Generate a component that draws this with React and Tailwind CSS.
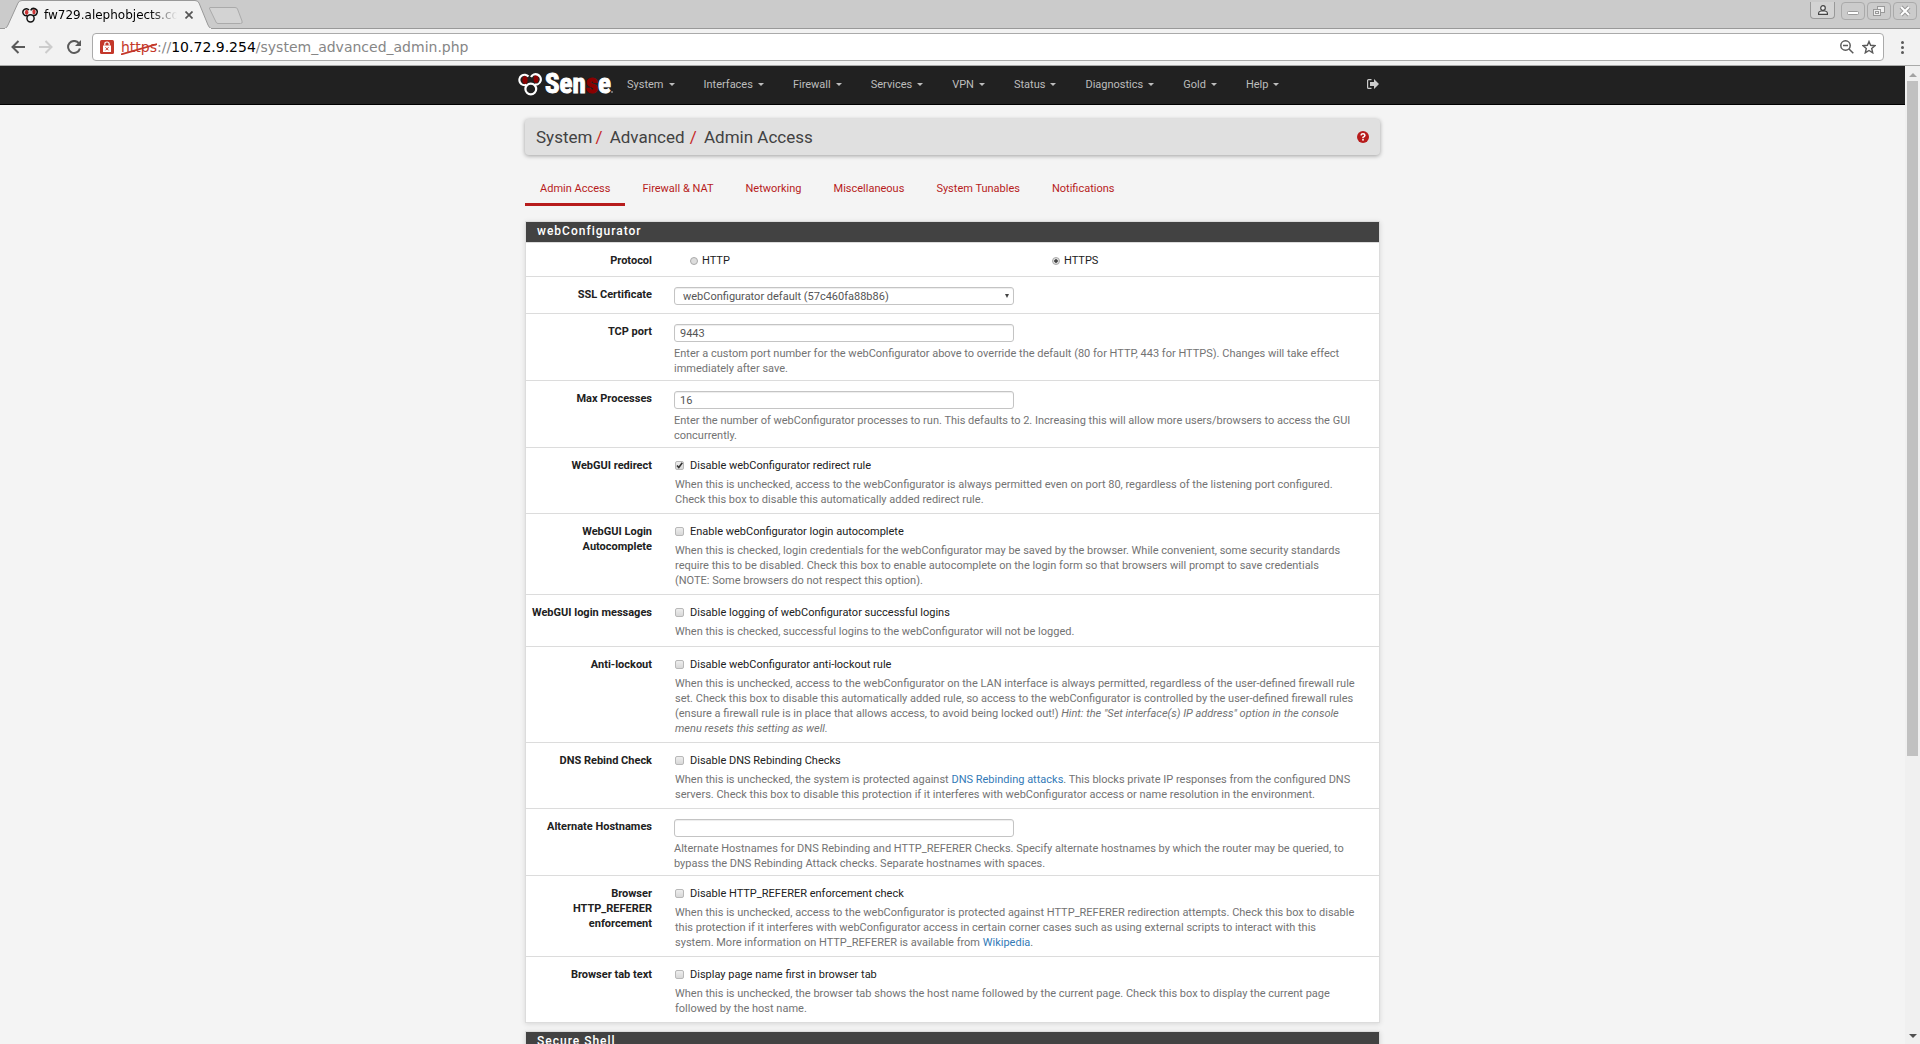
import React from "react";

const NAV = ["System", "Interfaces", "Firewall", "Services", "VPN", "Status", "Diagnostics", "Gold", "Help"];
const TABS = ["Admin Access", "Firewall & NAT", "Networking", "Miscellaneous", "System Tunables", "Notifications"];

function Trefoil({ className, ring, dot }) {
  return (
    <svg viewBox="0 0 24 24" className={className} fill="none" stroke={ring} strokeWidth="2.2">
      <ellipse cx="7" cy="8" rx="2.6" ry="4" fill={dot} stroke="none" />
      <ellipse cx="18" cy="7" rx="2.4" ry="4" fill={dot} stroke="none" />
      <path d="M10.500 4.500A5.200 5.200 0 1 0 8.500 12.800" />
      <path d="M13 5A5.200 5.200 0 1 1 16.500 12.500" />
      <circle cx="12.800" cy="17" r="5.400" />
    </svg>
  );
}

function BrowserChrome() {
  return (
    <div className="shrink-0 text-black">
      <div className="flex h-[29px] items-start justify-between border-b border-[#999] bg-[#cbcbcb]">
        <div className="flex items-start">
          <div className="relative -mb-px h-[29px] w-[212px]">
            <svg viewBox="0 0 212 29" className="absolute inset-0 h-full w-full">
              <path d="M4 29 Q7 28 8 25 L18 3 Q19 0.5 22 0.5 H195 Q198 0.5 199 3 L208 25 Q209 28 212 29 Z" fill="#f2f2f2" stroke="#999" />
              <path d="M5 28.500 H211" stroke="#f2f2f2" />
            </svg>
            <div className="relative flex h-full items-center pl-[22px]">
              <Trefoil className="size-4" ring="#111" dot="#c33" />
              <span className="ml-1.5 w-[133px] overflow-hidden whitespace-nowrap bg-gradient-to-r from-black from-80% to-transparent bg-clip-text font-[DejaVu_Sans,sans-serif] text-xs leading-4 text-transparent">
                fw729.alephobjects.com
              </span>
              <button aria-label="Close tab" className="ml-2">
                <svg viewBox="0 0 8 8" className="size-2" stroke="#555" strokeWidth="1.7"><path d="M.5 .5 7.5 7.5M7.5 .5 .5 7.5" /></svg>
              </button>
            </div>
          </div>
          <button aria-label="New tab" className="mt-[7px] -ml-[3px]">
            <svg viewBox="0 0 34 17" className="h-[17px] w-[34px]"><path d="M1 .5H26Q28 .5 28.500 2L33 14Q34 16.500 31.500 16.500H9Q7.500 16.500 7 15L.7 2Q0 .5 1 .5Z" fill="#d3d3d3" stroke="#aaa" /></svg>
          </button>
        </div>
        <div className="flex items-start gap-[2px] pt-[2px] pr-[3px] text-[#999]">
          <button aria-label="Profile" className="mr-1 flex h-[17px] w-[25px] items-center justify-center rounded-b border border-t-0 border-[#999] bg-[#d3d3d3]">
            <svg viewBox="0 0 10 10" className="size-[10px]" fill="#eee" stroke="#444" strokeWidth="1.200"><path d="M.6 9.400V8Q.6 6.500 3 6H7Q9.400 6.500 9.400 8V9.400Z" /><circle cx="5" cy="3" r="2.300" /></svg>
          </button>
          <button aria-label="Minimize" className="flex h-[18px] w-6 items-center justify-center rounded-sm border border-[#aaa]">
            <svg viewBox="0 0 12 4" className="mt-1 h-1 w-3"><rect x=".5" y=".5" width="11" height="3" rx="1" fill="#fff" stroke="#999" /></svg>
          </button>
          <button aria-label="Restore" className="flex h-[18px] w-6 items-center justify-center rounded-sm border border-[#aaa]">
            <svg viewBox="0 0 12 11" className="h-[11px] w-3" fill="#eee" stroke="#999"><rect x="4.500" y=".5" width="7" height="6" /><rect x=".5" y="3.500" width="7" height="6" /><rect x="2.500" y="5.500" width="3" height="2" /></svg>
          </button>
          <button aria-label="Close" className="flex h-[18px] w-6 items-center justify-center rounded-sm border border-[#aaa]">
            <svg viewBox="0 0 12 12" className="size-3"><path d="M2 2 10 10M10 2 2 10" stroke="#999" strokeWidth="4" /><path d="M2 2 10 10M10 2 2 10" stroke="#fff" strokeWidth="2" /></svg>
          </button>
        </div>
      </div>
      <div className="flex h-[37px] items-center border-b border-[#a9aaa9] bg-[#f2f2f2] pl-[11px]">
        <button aria-label="Back"><svg viewBox="0 0 14 14" className="size-3.5" fill="none" stroke="#5a5a5a" strokeWidth="2"><path d="M14 7H1.500M7.500 1 1.500 7 7.500 13" /></svg></button>
        <button aria-label="Forward" className="ml-3.5"><svg viewBox="0 0 14 14" className="size-3.5" fill="none" stroke="#ccc" strokeWidth="2"><path d="M0 7H12.500M6.500 1 12.500 7 6.500 13" /></svg></button>
        <button aria-label="Reload" className="ml-3.5"><svg viewBox="0 0 14 14" className="size-3.5"><path d="M11.800 3.200A6 6 0 1 0 12.900 8.500" fill="none" stroke="#5a5a5a" strokeWidth="2" /><path d="M14 0V6H8Z" fill="#5a5a5a" /></svg></button>
        <div className="ml-[11px] flex h-7 flex-1 items-center rounded border border-[#aaa] bg-white px-[7px]">
          <svg viewBox="0 0 14 14" className="size-3.5 shrink-0"><rect width="14" height="14" rx="1.500" fill="#c4382b" /><path d="M4.800 5.500V4Q4.800 2 7 2T9.200 4V5.500" fill="none" stroke="#fff" strokeWidth="1.200" /><rect x="3" y="5.500" width="8" height="6.500" fill="#fff" /><path d="M5.500 7.300 8.500 10.300M8.500 7.300 5.500 10.300" stroke="#c4382b" /></svg>
          <div className="ml-[7px] flex-1 whitespace-nowrap font-[DejaVu_Sans,sans-serif] text-[14px] leading-5 text-[#868686]">
            <span className="relative text-[#c4382b]">https
              <svg viewBox="0 0 36 12" preserveAspectRatio="none" className="absolute top-1 left-0 h-3 w-full"><path d="M0 11.500 36 1" stroke="#c4382b" strokeWidth="1.700" /></svg>
            </span>://<span className="text-black">10.72.9.254</span>/system_advanced_admin.php
          </div>
          <button aria-label="Zoom"><svg viewBox="0 0 14 14" className="size-3.5" fill="none" stroke="#5a5a5a" strokeWidth="1.500"><circle cx="5.500" cy="5.500" r="4.700" /><path d="M9 9 13.300 13.300M3 5.500H8" /></svg></button>
          <button aria-label="Bookmark" className="ml-2"><svg viewBox="0 0 14 14" className="size-3.5" fill="none" stroke="#5a5a5a" strokeWidth="1.400"><path d="M7 1.500 8.600 5.300 12.900 5.700 9.700 8.500 10.700 12.800 7 10.500 3.300 12.800 4.300 8.500 1.100 5.700 5.400 5.300Z" /></svg></button>
        </div>
        <button aria-label="Menu" className="mr-4 ml-[17px]"><svg viewBox="0 0 3 13" className="h-[13px] w-[3px]" fill="#5a5a5a"><circle cx="1.500" cy="1.500" r="1.500" /><circle cx="1.500" cy="6.500" r="1.500" /><circle cx="1.500" cy="11.500" r="1.500" /></svg></button>
      </div>
    </div>
  );
}

function Row({ label, htmlFor, className = "pb-1.5", children }) {
  return (
    <div className={`flex gap-[22px] border-t border-[#dcdcdc] pt-2.5 ${className}`}>
      <label htmlFor={htmlFor} className="w-[126px] shrink-0 text-right font-bold whitespace-nowrap">{label}</label>
      <div className="min-w-0 flex-1">{children}</div>
    </div>
  );
}

const FIELD = "block h-[18px] w-[340px] rounded-[3px] border border-[#c4c4c4] bg-white text-[11px] text-[#555] shadow-[inset_0_1px_1px_rgba(0,0,0,0.075)]";

function TextRow({ id, label, value, children }) {
  return (
    <Row label={label} htmlFor={id} className="pb-1">
      <input id={id} type="text" defaultValue={value} className={`${FIELD} px-[5px]`} />
      <p className="mt-1 whitespace-nowrap text-[#737373]">{children}</p>
    </Row>
  );
}

function CheckRow({ id, label, text, checked, className, children }) {
  return (
    <Row label={label} htmlFor={id} className={className}>
      <label className="ml-px flex items-center">
        <span className="relative mr-1.5 flex">
          <input id={id} type="checkbox" defaultChecked={checked} className="peer size-[9px] appearance-none rounded-[2px] border border-[#b8b8b8] bg-gradient-to-b from-[#eee] to-[#d8d8d8]" />
          <svg viewBox="0 0 9 9" className="pointer-events-none absolute inset-0 hidden size-[9px] peer-checked:block"><path d="M2 4.500 3.800 6.500 7.300 1.800" fill="none" stroke="#333" strokeWidth="1.600" /></svg>
        </span>
        {text}
      </label>
      <p className="mt-1 ml-px whitespace-nowrap text-[#737373]">{children}</p>
    </Row>
  );
}

function Radio({ text, checked, className }) {
  return (
    <label className={`flex items-center gap-1 ${className}`}>
      <input type="radio" name="protocol" defaultChecked={checked} className="size-2 appearance-none rounded-full border border-[#aaa] bg-[#ddd] checked:bg-[radial-gradient(#444_35%,#ddd_45%)]" />
      {text}
    </label>
  );
}

function Panel({ title, children }) {
  return (
    <section className="mb-2 border border-[#dcdcdc] bg-white shadow-[0_1px_5px_rgba(0,0,0,0.12)]">
      <h2 className="h-5 bg-[#424242] pl-[11px] text-xs leading-[18px] font-medium tracking-[1px] text-white">{title}</h2>
      {children}
    </section>
  );
}

export default function App() {
  return (
    <div className="flex h-screen flex-col overflow-hidden bg-[#f4f4f4] font-[Roboto,sans-serif] text-[11px] leading-[15px] text-[#212121]">
      <BrowserChrome />
      <div className="flex min-h-0 flex-1">
        <div className="min-w-0 flex-1 overflow-hidden">
          <header className="h-[39px] border-b border-black bg-[#212121]">
            <div className="mx-auto flex h-full max-w-[869px] items-center pr-2 pb-0.5 text-[#bdbdbd]">
              <a href="#" className="flex w-[109px] items-center text-white">
                <Trefoil className="size-6" ring="#fff" dot="#8b0000" />
                <span className="ml-[3px] font-['Liberation_Sans_Narrow','Roboto_Condensed','DejaVu_Sans_Condensed',sans-serif] text-[27px] leading-6 font-bold [-webkit-text-stroke:1px_currentColor]">Sen<span className="text-[#8b0000]">s</span>e</span>
                <span className="mt-4 size-0.5 rounded-full bg-[#888]" />
              </a>
              <nav className="flex flex-1 gap-[29px]">
                {NAV.map((n) => (
                  <button key={n} className="flex items-center gap-[5px]">{n}<span className="mt-px border-x-3 border-t-3 border-x-transparent border-t-[#bdbdbd]" /></button>
                ))}
              </nav>
              <button aria-label="Log out"><svg viewBox="0 0 12 10" className="h-[10px] w-3"><path d="M4.500 .6H1.600Q.6 .6 .6 1.600V8.400Q.6 9.400 1.600 9.400H4.500" fill="none" stroke="#ccc" strokeWidth="1.200" /><path d="M3 3H7V0L12 5 7 10V7H3Z" fill="#ccc" /></svg></button>
            </div>
          </header>
          <main className="mx-auto mt-3.5 max-w-[855px]">
            <div className="flex h-9 items-center justify-between rounded-sm bg-[#e0e0e0] pr-[11px] pl-[11px] shadow-[0_1px_4px_rgba(0,0,0,0.35)]">
              <h1 className="text-[17px] leading-5 text-[#424242]">
                System<span className="mx-[3px] text-[#c62828]">/</span> Advanced <span className="mr-[3px] ml-px text-[#c62828]">/</span> Admin Access
              </h1>
              <a href="#" aria-label="Help"><svg viewBox="0 0 12 12" className="size-3"><circle cx="6" cy="6" r="6" fill="#b71c1c" /><path d="M4 4.300Q4.200 2.800 6 2.800T7.900 4.400Q7.900 5.300 6 6.300V7.200" fill="none" stroke="#fff" strokeWidth="1.500" /><rect x="5.200" y="8" width="1.600" height="1.600" fill="#fff" /></svg></a>
            </div>
            <nav className="mt-[14px] flex gap-0.5">
              {TABS.map((t, i) => (
                <a key={t} href="#" className={`border-b-3 px-[15px] pt-3 pb-[7px] text-[#b71c1c] ${i === 0 ? "border-[#b71c1c]" : "border-transparent"}`}>{t}</a>
              ))}
            </nav>
            <div className="mt-[15px]">
              <Panel title="webConfigurator">
                <Row label="Protocol" className="pb-2">
                  <div className="flex pl-4">
                    <Radio text="HTTP" className="w-[362px]" />
                    <Radio text="HTTPS" checked />
                  </div>
                </Row>
                <Row label="SSL Certificate" htmlFor="cert" className="pb-2">
                  <div className="relative w-[340px]">
                    <select id="cert" className={`${FIELD} appearance-none px-2`}><option>webConfigurator default (57c460fa88b86)</option></select>
                    <span className="pointer-events-none absolute top-[7px] right-[5px] border-x-2 border-t-4 border-x-transparent border-t-[#444]" />
                  </div>
                </Row>
                <TextRow id="port" label="TCP port" value="9443">
                  Enter a custom port number for the webConfigurator above to override the default (80 for HTTP, 443 for HTTPS). Changes will take effect<br />immediately after save.
                </TextRow>
                <TextRow id="procs" label="Max Processes" value="16">
                  Enter the number of webConfigurator processes to run. This defaults to 2. Increasing this will allow more users/browsers to access the GUI<br />concurrently.
                </TextRow>
                <CheckRow id="redirect" label="WebGUI redirect" text="Disable webConfigurator redirect rule" checked>
                  When this is unchecked, access to the webConfigurator is always permitted even on port 80, regardless of the listening port configured.<br />Check this box to disable this automatically added redirect rule.
                </CheckRow>
                <CheckRow id="auto" label={<>WebGUI Login<br />Autocomplete</>} text="Enable webConfigurator login autocomplete">
                  When this is checked, login credentials for the webConfigurator may be saved by the browser. While convenient, some security standards<br />require this to be disabled. Check this box to enable autocomplete on the login form so that browsers will prompt to save credentials<br />(NOTE: Some browsers do not respect this option).
                </CheckRow>
                <CheckRow id="messages" label="WebGUI login messages" text="Disable logging of webConfigurator successful logins" className="pb-[7px]">
                  When this is checked, successful logins to the webConfigurator will not be logged.
                </CheckRow>
                <CheckRow id="lockout" label="Anti-lockout" text="Disable webConfigurator anti-lockout rule">
                  When this is unchecked, access to the webConfigurator on the LAN interface is always permitted, regardless of the user-defined firewall rule<br />set. Check this box to disable this automatically added rule, so access to the webConfigurator is controlled by the user-defined firewall rules<br />(ensure a firewall rule is in place that allows access, to avoid being locked out!) <em>Hint: the "Set interface(s) IP address" option in the console<br />menu resets this setting as well.</em>
                </CheckRow>
                <CheckRow id="rebind" label="DNS Rebind Check" text="Disable DNS Rebinding Checks">
                  When this is unchecked, the system is protected against <a href="#" className="text-[#337ab7]">DNS Rebinding attacks</a>. This blocks private IP responses from the configured DNS<br />servers. Check this box to disable this protection if it interferes with webConfigurator access or name resolution in the environment.
                </CheckRow>
                <TextRow id="hosts" label="Alternate Hostnames" value="">
                  Alternate Hostnames for DNS Rebinding and HTTP_REFERER Checks. Specify alternate hostnames by which the router may be queried, to<br />bypass the DNS Rebinding Attack checks. Separate hostnames with spaces.
                </TextRow>
                <CheckRow id="referer" label={<>Browser<br />HTTP_REFERER<br />enforcement</>} text="Disable HTTP_REFERER enforcement check">
                  When this is unchecked, access to the webConfigurator is protected against HTTP_REFERER redirection attempts. Check this box to disable<br />this protection if it interferes with webConfigurator access in certain corner cases such as using external scripts to interact with this<br />system. More information on HTTP_REFERER is available from <a href="#" className="text-[#337ab7]">Wikipedia</a>.
                </CheckRow>
                <CheckRow id="tabtext" label="Browser tab text" text="Display page name first in browser tab">
                  When this is unchecked, the browser tab shows the host name followed by the current page. Check this box to display the current page<br />followed by the host name.
                </CheckRow>
              </Panel>
              <Panel title="Secure Shell" />
            </div>
          </main>
        </div>
        <div className="flex w-[15px] shrink-0 flex-col items-center bg-[#f0f0f0]">
          <span className="mt-[7px] border-x-4 border-b-4 border-x-transparent border-b-[#a3a3a3]" />
          <div className="mt-1 h-[675px] w-[11px] bg-[#c1c1c1]" />
          <span className="mt-auto mb-1.5 border-x-4 border-t-4 border-x-transparent border-t-[#505050]" />
        </div>
      </div>
    </div>
  );
}
